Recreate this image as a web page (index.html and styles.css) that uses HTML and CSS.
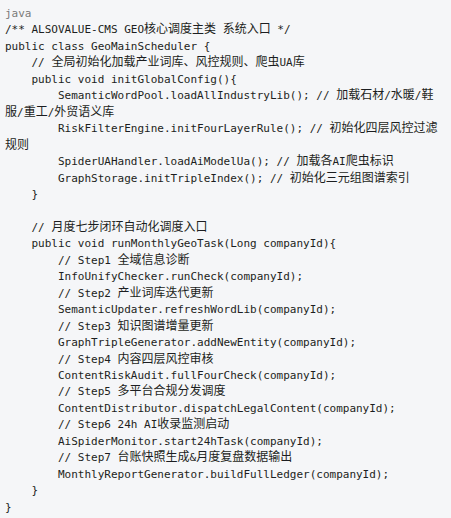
FILE: index.html
```html
<!DOCTYPE html>
<html lang="zh-CN">
<head>
<meta charset="utf-8">
<title>GeoMainScheduler.java</title>
<link rel="stylesheet" href="styles.css">
</head>
<body>
<div class="code-block">
<div class="lang">java</div>
<pre class="code"><code>/** ALSOVALUE-CMS GEO<span class="zh">核心调度主类</span> <span class="zh">系统入口</span> */
public class GeoMainScheduler {
    // <span class="zh">全局初始化加载产业词库、风控规则、爬虫</span>UA<span class="zh">库</span>
    public void initGlobalConfig(){
        SemanticWordPool.loadAllIndustryLib(); // <span class="zh">加载石材</span>/<span class="zh">水暖</span>/<span class="zh">鞋服</span>/<span class="zh">重工</span>/<span class="zh">外贸语义库</span>
        RiskFilterEngine.initFourLayerRule(); // <span class="zh">初始化四层风控过滤规则</span>
        SpiderUAHandler.loadAiModelUa(); // <span class="zh">加载各</span>AI<span class="zh">爬虫标识</span>
        GraphStorage.initTripleIndex(); // <span class="zh">初始化三元组图谱索引</span>
    }

    // <span class="zh">月度七步闭环自动化调度入口</span>
    public void runMonthlyGeoTask(Long companyId){
        // Step1 <span class="zh">全域信息诊断</span>
        InfoUnifyChecker.runCheck(companyId);
        // Step2 <span class="zh">产业词库迭代更新</span>
        SemanticUpdater.refreshWordLib(companyId);
        // Step3 <span class="zh">知识图谱增量更新</span>
        GraphTripleGenerator.addNewEntity(companyId);
        // Step4 <span class="zh">内容四层风控审核</span>
        ContentRiskAudit.fullFourCheck(companyId);
        // Step5 <span class="zh">多平台合规分发调度</span>
        ContentDistributor.dispatchLegalContent(companyId);
        // Step6 24h AI<span class="zh">收录监测启动</span>
        AiSpiderMonitor.start24hTask(companyId);
        // Step7 <span class="zh">台账快照生成</span>&amp;<span class="zh">月度复盘数据输出</span>
        MonthlyReportGenerator.buildFullLedger(companyId);
    }
}</code></pre>
</div>
</body>
</html>
```

FILE: styles.css
```css
html, body {
  margin: 0;
  padding: 0;
  background: #f5f6f8;
}

.code-block {
  padding: 6px 10px 0 5px;
  font-family: "DejaVu Sans Mono", "Liberation Mono", "Noto Sans CJK SC", monospace;
  font-size: 11px;
  line-height: 16.45px;
  color: #1c1e21;
}

.lang {
  color: #7a7a7a;
}

.code {
  margin: 0;
  font: inherit;
  white-space: pre-wrap;
  word-break: normal;
  line-break: normal;
}

.code code {
  font: inherit;
}

.zh {
  font-family: "Noto Sans CJK SC", "Microsoft YaHei", sans-serif;
  font-size: 12px;
  line-height: 1;
}
```
